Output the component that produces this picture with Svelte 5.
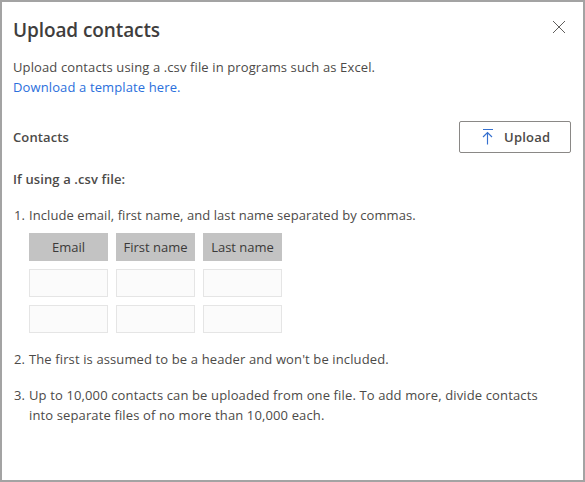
<script>
  const columns = ['Email', 'First name', 'Last name'];
  const rows = [0, 1];
</script>

<section class="panel">
  <header>
    <h1>Upload contacts</h1>
    <button class="close" aria-label="Close">
      <svg width="14" height="14" viewBox="0 0 14 14"><path d="M1 1L13 13M13 1L1 13" /></svg>
    </button>
  </header>

  <p class="intro">
    Upload contacts using a .csv file in programs such as Excel.<br />
    <a href="#template">Download a template here.</a>
  </p>

  <div class="contacts">
    <strong>Contacts</strong>
    <button class="upload">
      <svg width="12" height="16" viewBox="0 0 12 16"><path d="M1 .5H11M5.5 15.5V3.8M1 8L5.5 3.5L10 8" /></svg>
      <span>Upload</span>
    </button>
  </div>

  <h2>If using a .csv file:</h2>

  <ol>
    <li>
      <span class="num">1.</span>
      <div>
        <span class="lead">Include email, first name, and last name separated by commas.</span>
        <div class="grid">
          {#each columns as column}
            <div class="head">{column}</div>
          {/each}
          {#each rows as row}
            {#each columns as column}
              <div class="cell"></div>
            {/each}
          {/each}
        </div>
      </div>
    </li>
    <li>
      <span class="num">2.</span>
      <div>The first is assumed to be a header and won't be included.</div>
    </li>
    <li>
      <span class="num">3.</span>
      <div class="limit">
        Up to 10,000 contacts can be uploaded from one file. To add more, divide contacts<br />
        into separate files of no more than 10,000 each.
      </div>
    </li>
  </ol>
</section>

<style>
  .panel {
    box-sizing: border-box;
    width: 585px;
    height: 482px;
    padding: 15px 12px 0 11px;
    border: 2px solid #a3a3a3;
    background: #fff;
    color: #4c4a48;
    font: 13px/20px 'Open Sans', 'Noto Sans', sans-serif;
    letter-spacing: 0.12px;
    white-space: nowrap;
    overflow: hidden;
  }
  header {
    display: flex;
    justify-content: space-between;
    height: 40px;
  }
  h1, h2, p, ol {
    margin: 0;
    padding: 0;
  }
  h1 {
    font-size: 19px;
    line-height: 26px;
    font-weight: 600;
    letter-spacing: -0.1px;
    color: #3f3e3d;
  }
  button {
    padding: 0;
    background: #fff;
    font: inherit;
    color: inherit;
  }
  svg {
    display: block;
    fill: none;
  }
  .close {
    display: flex;
    height: 14px;
    margin: 3px 5px 0 0;
    border: 0;
  }
  .close path {
    stroke: #605e5c;
  }
  a {
    color: #2b6fdc;
    text-decoration: none;
  }
  .contacts {
    display: flex;
    align-items: center;
    justify-content: space-between;
    height: 32px;
    margin-top: 24px;
  }
  strong, h2, .upload {
    font-size: 13px;
    font-weight: 600;
  }
  .upload {
    box-sizing: border-box;
    display: flex;
    align-items: center;
    gap: 10px;
    width: 112px;
    height: 32px;
    padding-left: 22px;
    border: 1px solid #8a8886;
    border-radius: 2px;
    letter-spacing: 0.25px;
  }
  .upload path {
    stroke: #3570cf;
    stroke-width: 1.15;
  }
  h2 {
    margin-top: 16px;
    line-height: 20px;
  }
  ol {
    list-style: none;
    margin-top: 16px;
  }
  li {
    display: flex;
    margin-bottom: 16px;
  }
  .num {
    width: 15px;
    margin-left: 1px;
    flex: none;
  }
  .lead {
    letter-spacing: 0.07px;
  }
  .limit {
    letter-spacing: 0.13px;
  }
  .grid {
    display: grid;
    grid-template-columns: repeat(3, 79px);
    grid-auto-rows: 28px;
    gap: 8px;
    margin-top: 8px;
  }
  .head {
    display: flex;
    align-items: center;
    justify-content: center;
    background: #c3c3c3;
    color: #3b3a39;
    letter-spacing: 0;
  }
  .cell {
    border: 1px solid #e5e5e5;
    background: #fbfbfb;
  }
</style>
